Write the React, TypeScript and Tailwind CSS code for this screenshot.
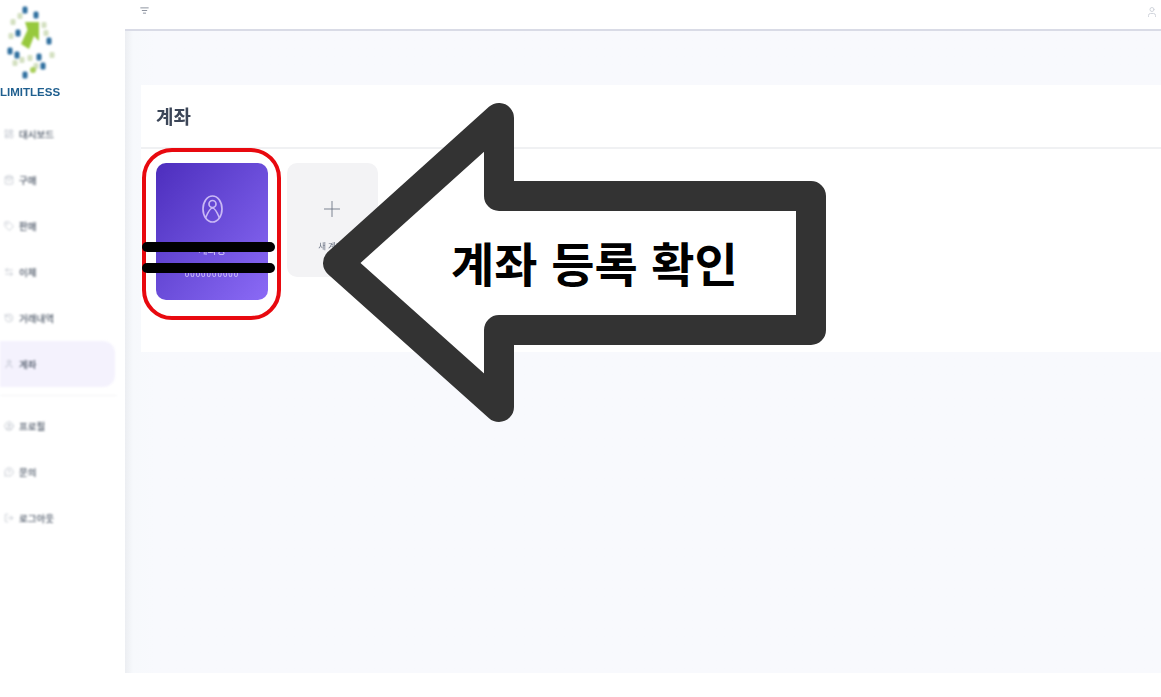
import { ArrowLeftRight, CircleUser, History, LayoutDashboard, ListFilter, LogOut, MessageCircleQuestion, Plus, ShoppingBag, Tag, User } from 'lucide-react';

const FONT = 'font-["Noto_Sans_CJK_KR","Noto_Sans",sans-serif]';

const TOP_ITEMS = [
  { label: '대시보드', icon: LayoutDashboard },
  { label: '구매', icon: ShoppingBag },
  { label: '판매', icon: Tag },
  { label: '이체', icon: ArrowLeftRight },
  { label: '거래내역', icon: History },
  { label: '계좌', icon: User, active: true },
];

const BOTTOM_ITEMS = [
  { label: '프로필', icon: CircleUser },
  { label: '문의', icon: MessageCircleQuestion },
  { label: '로그아웃', icon: LogOut },
];

function Logo() {
  const blue = [[25, 10], [36, 15], [18, 33], [49, 41], [10, 51], [17, 55], [39, 57], [25, 75], [43, 66]];
  const pale = [[13, 22], [20, 16], [44, 25], [30, 58], [52, 55], [36, 66], [11, 36], [46, 33], [22, 60], [15, 63]];
  return (
    <svg width="60" height="88" viewBox="0 0 60 88" className="block blur-[0.8px]">
      {pale.map(([cx, cy]) => (
        <rect key={`${cx}-${cy}`} x={cx - 2.5} y={cy - 3} width="5" height="6" rx="1.5" fill="#d3dfc0" />
      ))}
      {blue.map(([cx, cy]) => (
        <rect key={`${cx}-${cy}`} x={cx - 2.5} y={cy - 3.5} width="5" height="7" rx="1.5" fill="#2f6f9f" />
      ))}
      <circle cx="33" cy="70" r="3" fill="#a9cf5a" />
      <path d="M25 22 L39 22 L39 41 L34 36 L29 49 L21 44 L27.5 30 Z" fill="#97c93d" />
    </svg>
  );
}

function NavItem({ label, icon: Icon, active }: { label: string; icon: typeof User; active?: boolean }) {
  return (
    <div className={`flex h-[46px] w-[115px] items-center gap-[5px] rounded-r-xl pl-[4px] ${active ? 'bg-[#f4f2fd]' : ''}`}>
      <Icon size={10} strokeWidth={1.2} className="text-gray-400" />
      <span className="text-[9.5px] font-medium text-gray-600">{label}</span>
    </div>
  );
}

export default function App() {
  return (
    <div className={`relative h-[697px] w-[1161px] overflow-hidden bg-white ${FONT}`}>
      <div className="flex h-[673px]">
        {/* Sidebar */}
        <aside className="flex w-[125px] shrink-0 flex-col bg-white">
          <Logo />
          <div className="h-[16px] text-[11.5px] leading-[8px] font-bold text-[#1f5f8f] blur-[0.5px] font-['Liberation_Sans',sans-serif]">
            LIMITLESS
          </div>
          <nav className="mt-[7px] flex flex-col blur-[0.8px]">
            {TOP_ITEMS.map(item => (
              <NavItem key={item.label} {...item} />
            ))}
            <div className="mt-[8px] mb-[7px] h-px w-[117px] bg-gray-100" />
            {BOTTOM_ITEMS.map(item => (
              <NavItem key={item.label} {...item} />
            ))}
          </nav>
        </aside>

        {/* Main */}
        <div className="flex min-w-0 flex-1 flex-col bg-gradient-to-r from-[#eceef2] via-[#f7f9fc] via-[8px] to-[#f8f9fd] to-[30px]">
          <header className="flex h-[31px] shrink-0 items-start justify-between border-b-2 border-[#d9dbe6] bg-white pt-[6px] pr-[3px] pl-[15px] blur-[0.5px]">
            <ListFilter size={9} className="text-gray-500" />
            <User size={12} className="text-gray-300" />
          </header>

          <section className="mt-[54px] ml-[16px] h-[267px] bg-white">
            <div className="flex h-[64px] items-center border-b-2 border-[#f0f1f3] pl-[15px]">
              <h1 className="text-[19px] font-bold text-[#3c4658] blur-[0.5px]">계좌</h1>
            </div>
            <div className="flex items-start gap-[19px] pt-[14px] pl-[15px]">
              <div className="flex h-[137px] w-[112px] flex-col items-center rounded-[10px] bg-gradient-to-br from-[#4d2dbd] to-[#8b6af6] pt-[32px] blur-[0.4px]">
                <svg width="21" height="28" viewBox="0 0 21 28" fill="none" stroke="#c9b8f5" strokeWidth="1.7">
                  <ellipse cx="10.5" cy="14" rx="9.5" ry="13" />
                  <circle cx="10.5" cy="9" r="3.5" />
                  <path d="M3.5 23 C6 17 8 13 10.5 13 C13 13 15 17 17.5 23" />
                </svg>
                <span className="mt-[21px] text-[10px] leading-[12px] text-[#d9cffa]">계좌명</span>
                <span className="mt-[12px] text-[8px] leading-[12px] tracking-[1px] text-[#d9cffa]">0000000000</span>
              </div>
              <div className="flex h-[114px] w-[91px] flex-col items-center rounded-[10px] bg-[#f3f3f5] pt-[33px] blur-[0.4px]">
                <Plus size={26} strokeWidth={0.8} className="-ml-[2px] text-gray-500" />
                <span className="mt-[17px] -ml-[3px] text-[8.5px] leading-[12px] text-gray-500">새 계좌</span>
              </div>
            </div>
          </section>
        </div>
      </div>

      {/* Annotations drawn over the screenshot */}
      <div className="absolute top-[148px] left-[142px] h-[172px] w-[139px] rounded-[30px] border-[4px] border-[#e8090f]" />
      <div className="absolute top-[242px] left-[142px] h-[10px] w-[133px] rounded-full bg-black" />
      <div className="absolute top-[263px] left-[142px] h-[10px] w-[133px] rounded-full bg-black" />
      <svg width="1161" height="697" viewBox="0 0 1161 697" className="absolute top-0 left-0">
        <path
          d="M338 263 L499 118 L499 196 L811 196 L811 330 L499 330 L499 407 Z"
          fill="#fff"
          stroke="#333333"
          strokeWidth="30"
          strokeLinejoin="round"
        />
      </svg>
      <div className="absolute top-[230px] left-[451px] text-[47px] leading-[64px] font-bold [word-spacing:3px] whitespace-nowrap text-black">
        계좌 등록 확인
      </div>
    </div>
  );
}
